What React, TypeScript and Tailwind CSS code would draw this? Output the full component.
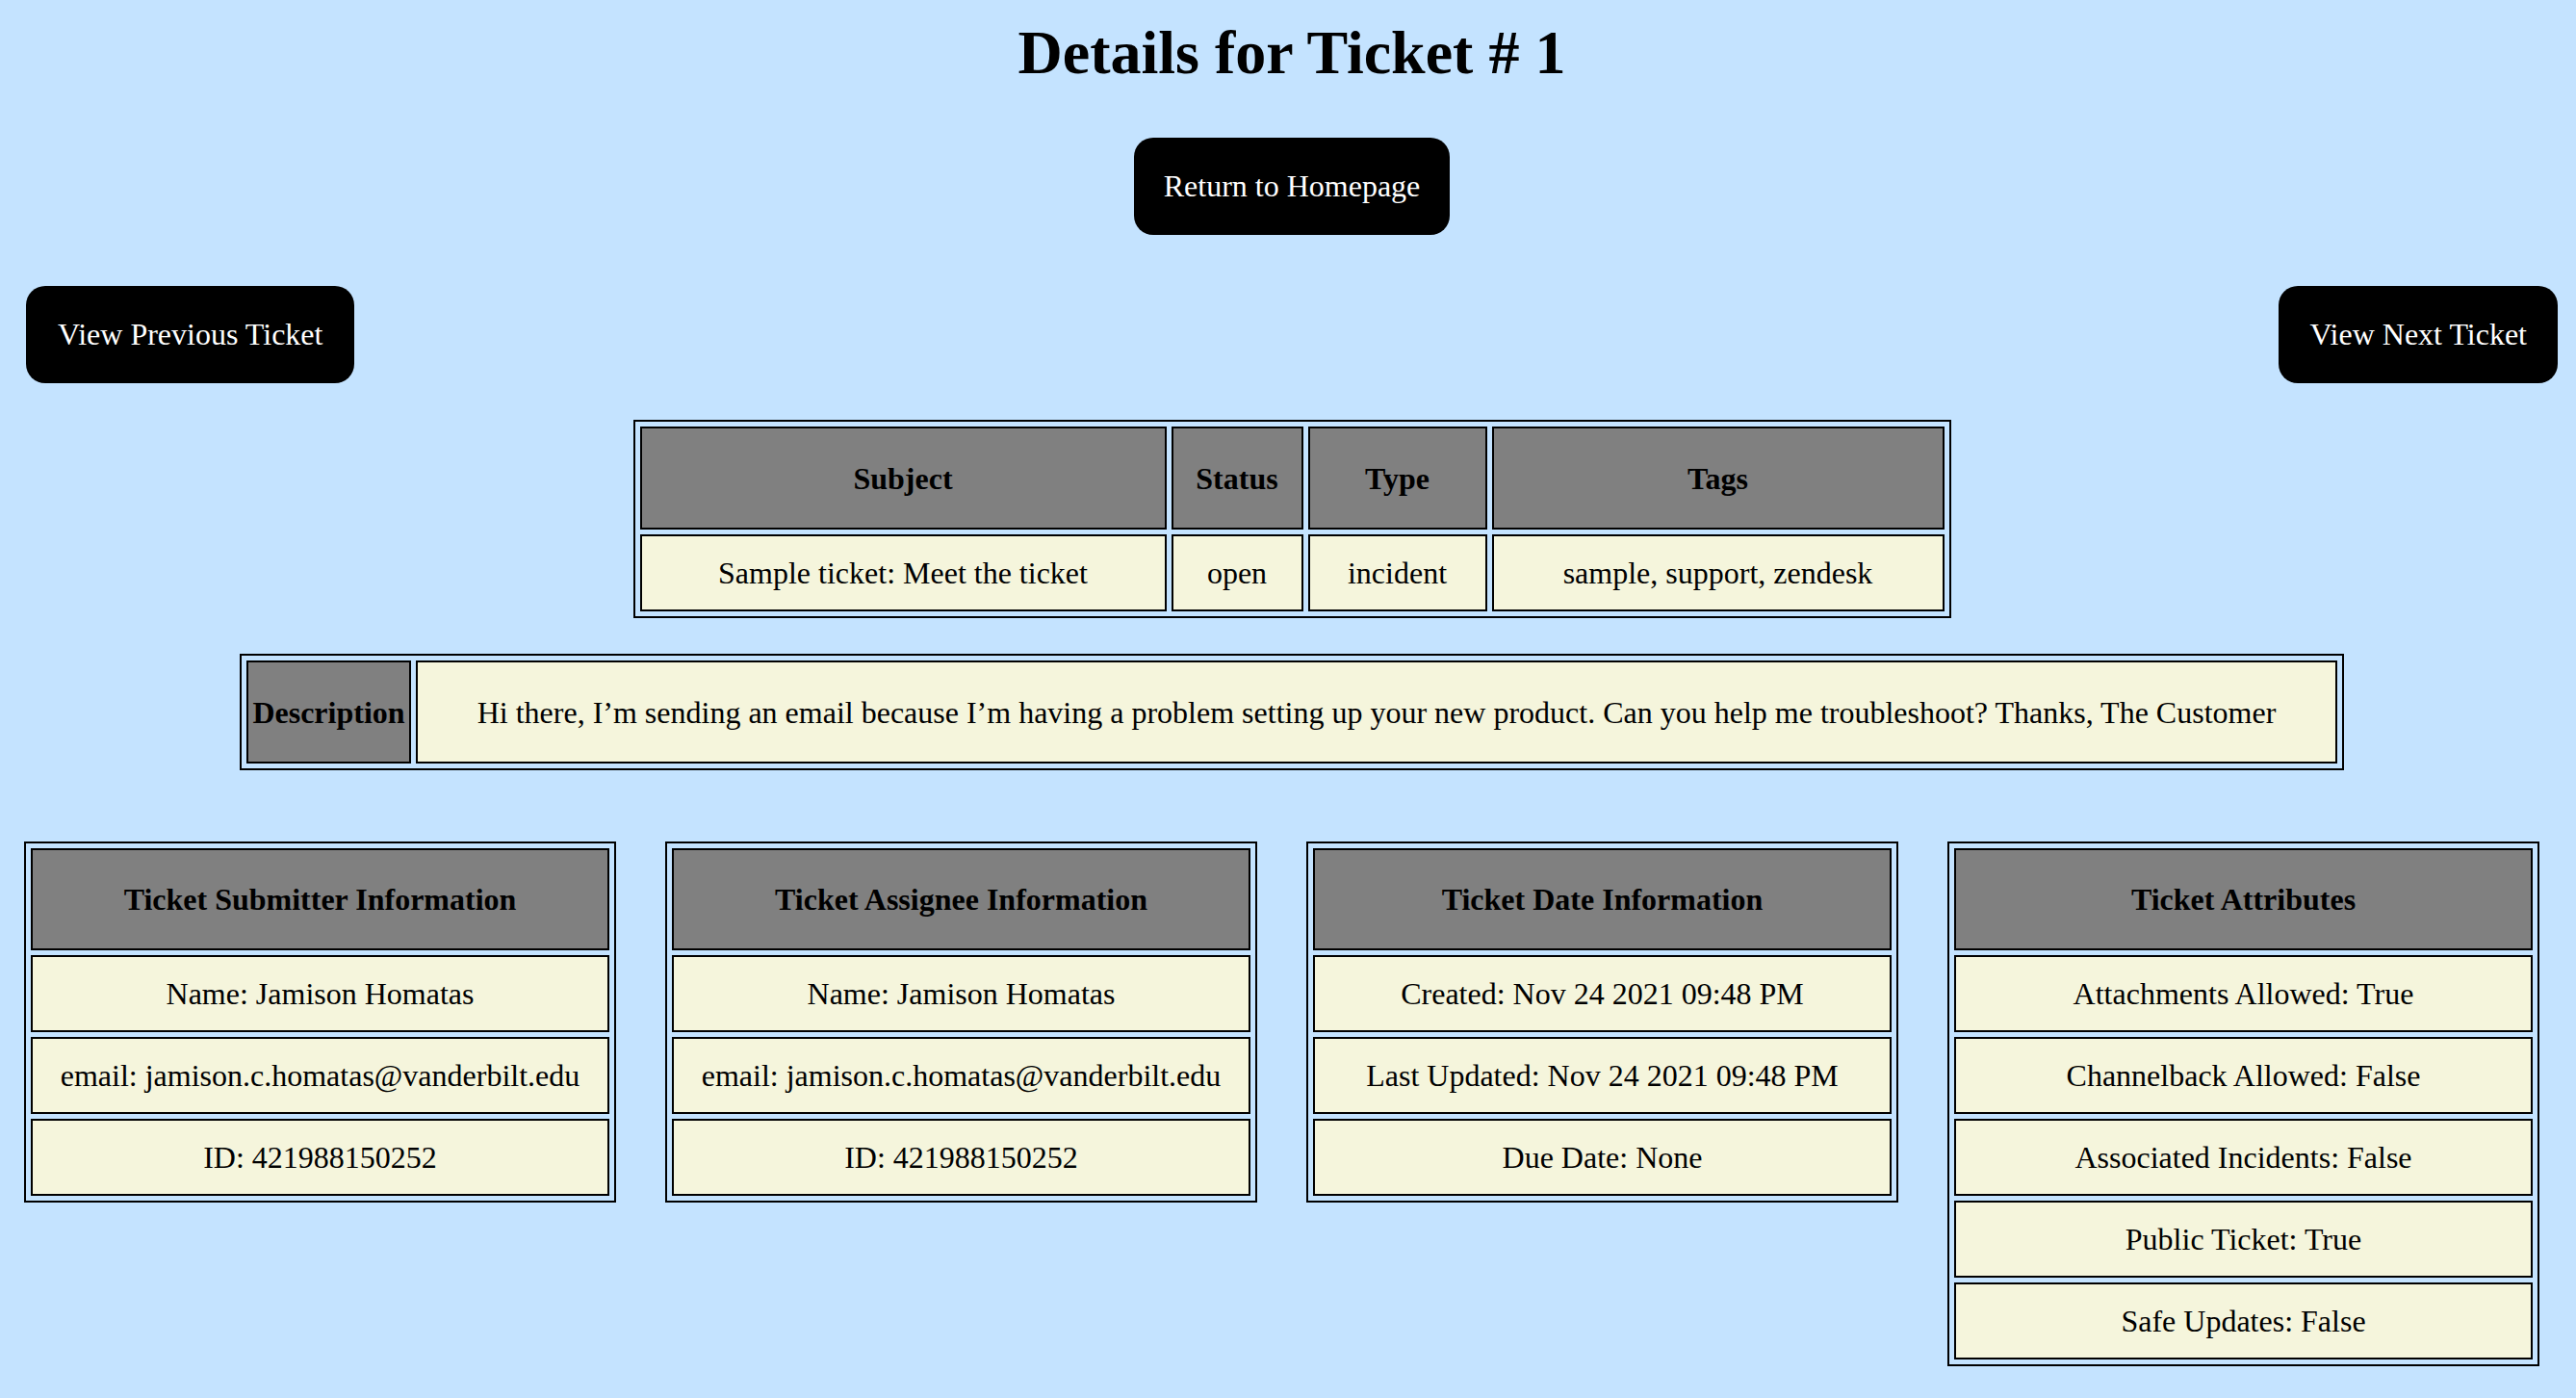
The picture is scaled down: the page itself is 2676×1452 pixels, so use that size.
import React from "react";

const serif = { fontFamily: '"Liberation Serif", "Times New Roman", serif' };

interface InfoTableProps {
  title: string;
  rows: string[];
}

const InfoTable: React.FC<InfoTableProps> = ({ title, rows }) => (
  <table className="w-[615px] table-fixed border-separate border-spacing-[5px] border-2 border-black">
    <thead>
      <tr>
        <th className="h-[106px] border-2 border-black bg-[#808080] text-center font-bold">
          {title}
        </th>
      </tr>
    </thead>
    <tbody>
      {rows.map((row) => (
        <tr key={row}>
          <td className="h-[80px] border-2 border-black bg-[#f5f5dc] text-center">
            {row}
          </td>
        </tr>
      ))}
    </tbody>
  </table>
);

export default function App() {
  return (
    <div
      style={serif}
      className="min-h-[1452px] bg-[#c4e3ff] pl-[8px] text-[32px] text-black"
    >
      <h1 className="pt-[18px] text-center text-[64px] font-bold leading-[74px]">
        Details for Ticket # 1
      </h1>

      <div className="mt-[51px] flex justify-center">
        <button className="rounded-[20px] bg-black px-[31px] py-[32px] leading-[37px] text-white">
          Return to Homepage
        </button>
      </div>

      <div className="mt-[53px] flex items-center justify-between pl-[19px] pr-[19px]">
        <button className="rounded-[20px] bg-black px-[33px] py-[32px] leading-[37px] text-white">
          View Previous Ticket
        </button>
        <button className="rounded-[20px] bg-black px-[32px] py-[32px] leading-[37px] text-white">
          View Next Ticket
        </button>
      </div>

      <table className="mx-auto mt-[38px] w-[1369px] table-fixed border-separate border-spacing-[5px] border-2 border-black">
        <thead>
          <tr>
            <th className="h-[107px] w-[547px] border-2 border-black bg-[#808080] font-bold">
              Subject
            </th>
            <th className="h-[107px] w-[137px] border-2 border-black bg-[#808080] font-bold">
              Status
            </th>
            <th className="h-[107px] w-[186px] border-2 border-black bg-[#808080] font-bold">
              Type
            </th>
            <th className="h-[107px] w-[470px] border-2 border-black bg-[#808080] font-bold">
              Tags
            </th>
          </tr>
        </thead>
        <tbody>
          <tr>
            <td className="h-[80px] border-2 border-black bg-[#f5f5dc] text-center">
              Sample ticket: Meet the ticket
            </td>
            <td className="h-[80px] border-2 border-black bg-[#f5f5dc] text-center">
              open
            </td>
            <td className="h-[80px] border-2 border-black bg-[#f5f5dc] text-center">
              incident
            </td>
            <td className="h-[80px] border-2 border-black bg-[#f5f5dc] text-center">
              sample, support, zendesk
            </td>
          </tr>
        </tbody>
      </table>

      <table className="mx-auto mt-[37px] w-[2186px] table-fixed border-separate border-spacing-[5px] border-2 border-black">
        <tbody>
          <tr>
            <th className="h-[107px] w-[171px] border-2 border-black bg-[#808080] font-bold">
              Description
            </th>
            <td className="h-[107px] border-2 border-black bg-[#f5f5dc] text-center">
              Hi there, I’m sending an email because I’m having a problem setting up your new
              product. Can you help me troubleshoot? Thanks, The Customer
            </td>
          </tr>
        </tbody>
      </table>

      <div className="mt-[74px] flex items-start gap-[51px] pl-[17px] pb-[33px]">
        <InfoTable
          title="Ticket Submitter Information"
          rows={[
            "Name: Jamison Homatas",
            "email: jamison.c.homatas@vanderbilt.edu",
            "ID: 421988150252",
          ]}
        />
        <InfoTable
          title="Ticket Assignee Information"
          rows={[
            "Name: Jamison Homatas",
            "email: jamison.c.homatas@vanderbilt.edu",
            "ID: 421988150252",
          ]}
        />
        <InfoTable
          title="Ticket Date Information"
          rows={[
            "Created: Nov 24 2021 09:48 PM",
            "Last Updated: Nov 24 2021 09:48 PM",
            "Due Date: None",
          ]}
        />
        <InfoTable
          title="Ticket Attributes"
          rows={[
            "Attachments Allowed: True",
            "Channelback Allowed: False",
            "Associated Incidents: False",
            "Public Ticket: True",
            "Safe Updates: False",
          ]}
        />
      </div>
    </div>
  );
}
